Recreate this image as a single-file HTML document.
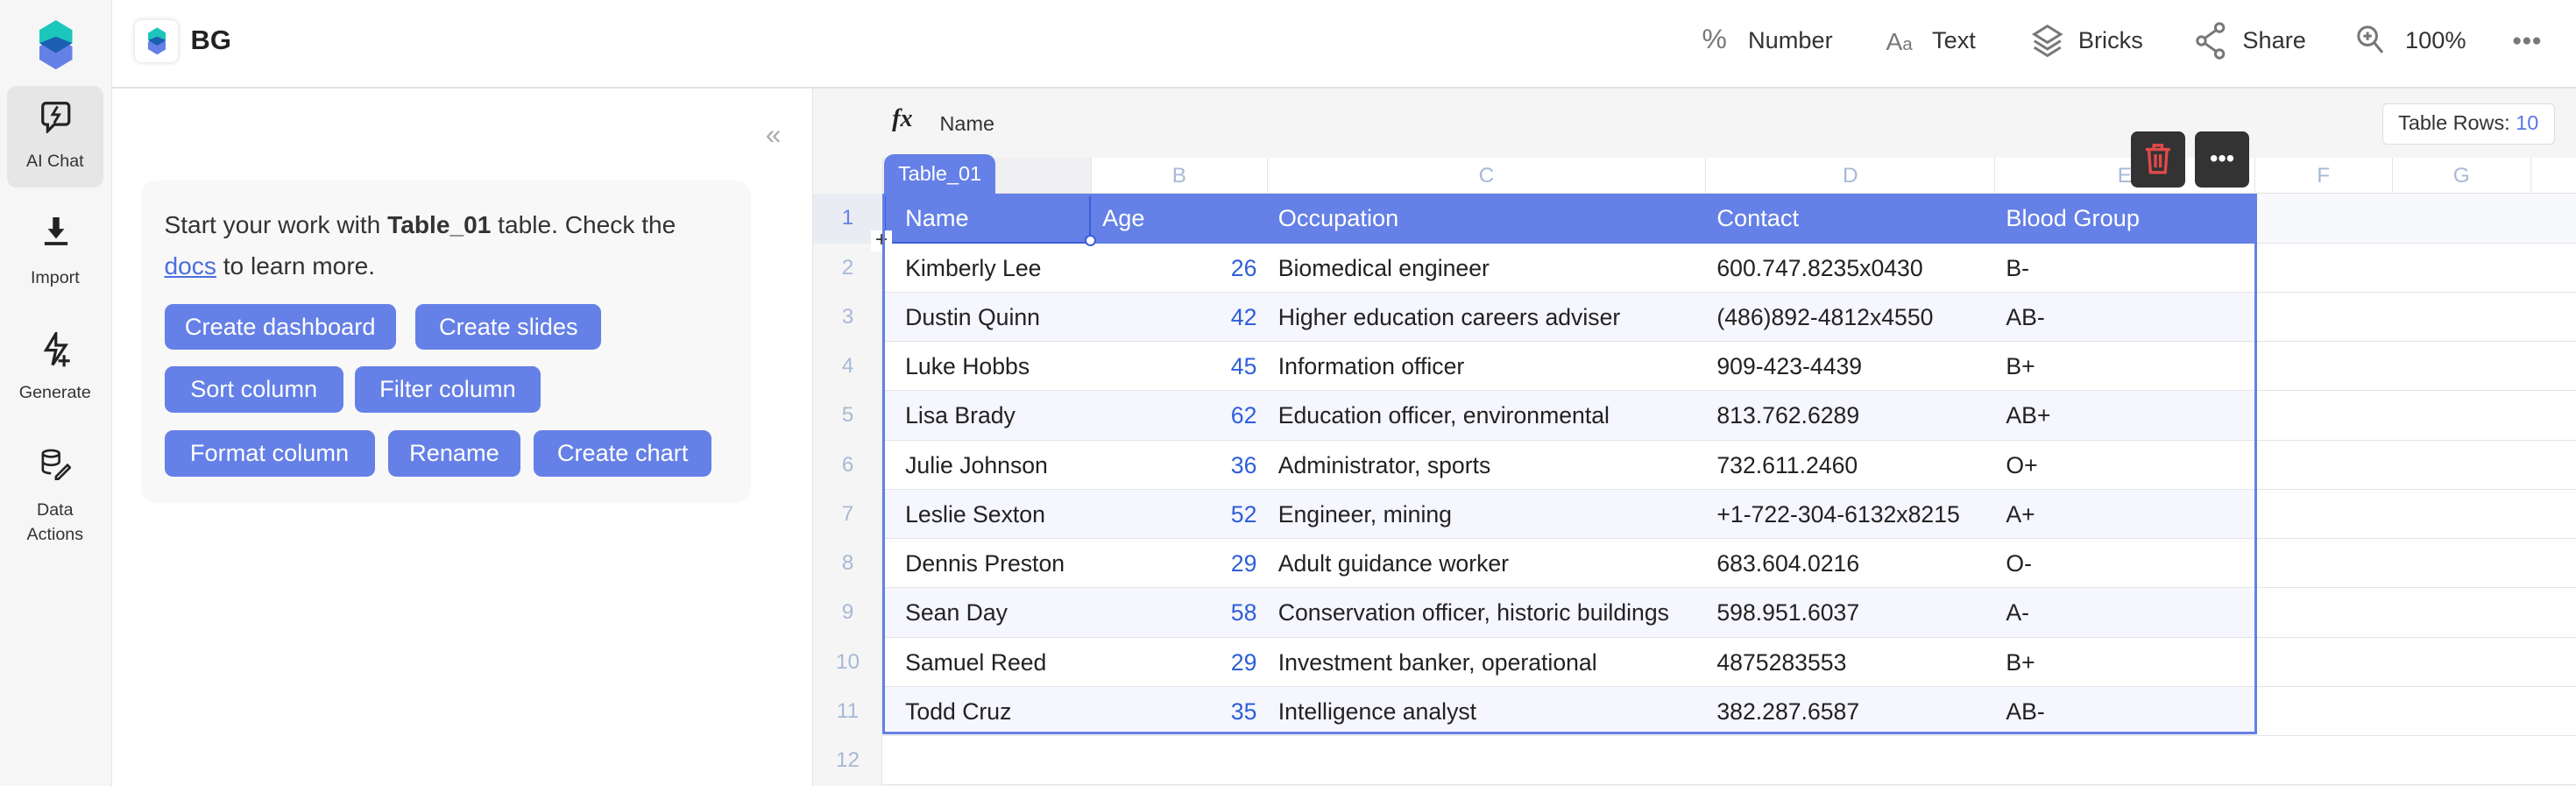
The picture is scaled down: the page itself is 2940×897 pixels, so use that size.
<!DOCTYPE html>
<html><head><meta charset="utf-8"><style>
*{box-sizing:border-box;margin:0;padding:0}
html,body{width:2940px;height:897px;overflow:hidden;background:#fff}
#root{zoom:1.875;width:1568px;height:478.4px;position:relative;font-family:"Liberation Sans",sans-serif;color:#222;overflow:hidden}
.abs{position:absolute}
.side{left:0;top:0;width:68px;height:480px;background:#f6f6f6;border-right:1px solid #e3e3e3}
.navl{position:absolute;left:0;width:67px;text-align:center;font-size:10.5px;color:#333}
.hdr{left:68px;top:0;right:0;height:54px;background:#fff;border-bottom:1.5px solid #e2e2e2}
.tb{position:absolute;top:16px;font-size:14.5px;color:#333}
.chat{left:68px;top:54px;width:427px;height:430px;background:#fff;border-right:1px solid #e3e3e3}
.card{left:86px;top:110px;width:371px;height:196px;background:#f8f8f8;border-radius:9px}
.btn{position:absolute;height:28px;line-height:28px;background:#6580e6;color:#fff;border-radius:5px;font-size:14.5px;text-align:center}
.grid{left:495px;top:54px;right:0;height:430px;background:#f5f5f5}
.colh{position:absolute;top:96px;height:22px;background:#fff;border-left:1px solid #e6e6e6;color:#a7b9d6;font-size:13px;text-align:center;line-height:22px;border-bottom:1px solid #e2e2e2}
.row{position:absolute;left:537px;right:0;height:30px;border-bottom:1px solid #e4e4e8;font-size:14px;line-height:30px}
.rn{position:absolute;left:495px;width:42px;height:30px;text-align:center;line-height:30px;font-size:13px;color:#a7b9d6}
.c{position:absolute;top:0;white-space:nowrap}
</style></head><body><div id="root">
<div class="abs side">
 <svg class="abs" style="left:24px;top:12px" width="20" height="30" viewBox="0 0 20 30"><polygon points="10,0 20,6 20,14 10,20 0,14 0,6" fill="#1cc6bb"/><polygon points="10,10 20,16 20,24 10,30 0,24 0,16" fill="#6580e6"/><polygon points="10,10 20,14 10,20 0,14" fill="#1a5fb0"/></svg>
 <div class="abs" style="left:4px;top:52px;width:59px;height:62px;background:#e6e6e6;border-radius:6px"></div>
 <svg class="abs" style="left:24px;top:61px" width="20" height="20" viewBox="0 0 20 20" fill="none" stroke="#222" stroke-width="1.7"><path d="M4 2h12a2 2 0 0 1 2 2v9a2 2 0 0 1-2 2H9l-4 4v-4H4a2 2 0 0 1-2-2V4a2 2 0 0 1 2-2z"/><path d="M11 4l-3 5h4l-3 5" stroke-width="1.5"/></svg>
 <div class="navl" style="top:92px">AI Chat</div>
 <svg class="abs" style="left:26px;top:132px" width="16" height="18" viewBox="0 0 16 18"><path d="M6 0h4v7h3l-5 6-5-6h3z" fill="#222"/><rect x="1" y="15" width="14" height="2" fill="#222"/></svg>
 <div class="navl" style="top:163px">Import</div>
 <svg class="abs" style="left:24px;top:202px" width="20" height="22" viewBox="0 0 20 22" fill="none" stroke="#222" stroke-width="1.7"><path d="M10 1L4 11h6l-2 9 8-12h-6z"/><path d="M15 14v7M11.5 17.5h7"/></svg>
 <div class="navl" style="top:233px">Generate</div>
 <svg class="abs" style="left:25px;top:273px" width="18" height="20" viewBox="0 0 18 20" fill="none" stroke="#222" stroke-width="1.4"><ellipse cx="6" cy="3" rx="5" ry="2"/><path d="M1 3v10c0 1 2 2 5 2M11 3v5M1 8c0 1 2 2 5 2s5-1 5-2"/><path d="M9 17l7-7 1.5 1.5-7 7H9z"/></svg>
 <div class="navl" style="top:303px;line-height:15px">Data<br>Actions</div>
</div>
<div class="abs hdr">
 <div class="abs" style="left:14px;top:12px;width:26px;height:26px;background:#fff;border-radius:4px;box-shadow:0 0 3px rgba(0,0,0,.18)"></div>
 <svg class="abs" style="left:22px;top:16px" width="11" height="18" viewBox="0 0 20 30"><polygon points="10,0 20,6 20,14 10,20 0,14 0,6" fill="#1cc6bb"/><polygon points="10,10 20,16 20,24 10,30 0,24 0,16" fill="#6580e6"/><polygon points="10,10 20,14 10,20 0,14" fill="#1a5fb0"/></svg>
 <div class="abs" style="left:48px;top:15px;font-size:16.5px;font-weight:bold;color:#222">BG</div>
 <div class="tb" style="left:968px;color:#777;font-size:17px;top:14px">%</div><div class="tb" style="left:996px">Number</div>
 <div class="tb" style="left:1080px;color:#777;font-size:15px;top:17px">A<span style="font-size:11px">a</span></div><div class="tb" style="left:1108px">Text</div>
 <svg class="abs" style="left:1168px;top:14px" width="20" height="22" viewBox="0 0 20 22" fill="none" stroke="#777" stroke-width="1.6"><path d="M10 2l8 5-8 5-8-5z"/><path d="M2 11l8 5 8-5M2 15l8 5 8-5"/></svg><div class="tb" style="left:1197px">Bricks</div>
 <svg class="abs" style="left:1268px;top:13px" width="20" height="24" viewBox="0 0 20 24" fill="none" stroke="#777" stroke-width="1.6"><circle cx="15" cy="4" r="2.5"/><circle cx="4" cy="12" r="2.5"/><circle cx="15" cy="20" r="2.5"/><path d="M13 5.5L6 10.5M6 13.5l7 5"/></svg><div class="tb" style="left:1297px">Share</div>
 <svg class="abs" style="left:1366px;top:15px" width="18" height="20" viewBox="0 0 18 20" fill="none" stroke="#777" stroke-width="1.6"><circle cx="7" cy="7" r="5.5"/><path d="M11 11l5 6M7 4.5v5M4.5 7h5"/></svg><div class="tb" style="left:1396px">100%</div>
 <svg class="abs" style="left:1461px;top:22px" width="18" height="6" viewBox="0 0 18 6" fill="#777"><circle cx="3" cy="3" r="2.2"/><circle cx="9" cy="3" r="2.2"/><circle cx="15" cy="3" r="2.2"/></svg>
</div>
<div class="abs chat"><div class="abs" style="left:398px;top:18px;font-size:17px;color:#aaa">«</div></div>
<div class="abs card">
 <div class="abs" style="left:14px;top:15px;font-size:15px;line-height:25px;color:#333;white-space:nowrap">Start your work with <b>Table_01</b> table. Check the<br><span style="color:#4a6ee0;text-decoration:underline">docs</span> to learn more.</div>
</div>
<div class="btn" style="left:100px;top:185px;width:141px">Create dashboard</div>
<div class="btn" style="left:253px;top:185px;width:113px">Create slides</div>
<div class="btn" style="left:100px;top:223px;width:109px">Sort column</div>
<div class="btn" style="left:216px;top:223px;width:113px">Filter column</div>
<div class="btn" style="left:100px;top:262px;width:128px">Format column</div>
<div class="btn" style="left:236px;top:262px;width:81px">Rename</div>
<div class="btn" style="left:325px;top:262px;width:108px">Create chart</div>
<div class="abs grid"></div>
<div class="abs" style="left:543px;top:64px;font-size:15px;font-style:italic;font-family:'Liberation Serif',serif;font-weight:bold">fx</div>
<div class="abs" style="left:572px;top:68px;font-size:12.5px;color:#333">Name</div>
<div class="abs" style="left:1450px;top:63px;width:105px;height:25px;background:#fff;border:1px solid #ddd;border-radius:3px;font-size:12.5px;line-height:23px;text-align:center;color:#333">Table Rows: <span style="color:#5a78e0">10</span></div>
<div class="colh" style="left:537px;width:127px;background:#f0f0f2"></div>
<div class="abs" style="left:538px;top:94px;width:68px;height:24px;background:#6580e6;border-radius:6px 6px 0 0;color:#fff;font-size:12.5px;line-height:24px;text-align:center">Table_01</div>
<div class="colh" style="left:664px;width:107px">B</div>
<div class="colh" style="left:771px;width:267px">C</div>
<div class="colh" style="left:1038px;width:176px">D</div>
<div class="colh" style="left:1214px;width:158px">E</div>
<div class="colh" style="left:1372px;width:84px">F</div>
<div class="colh" style="left:1456px;width:84px">G</div>
<div class="colh" style="left:1540px;width:40px"></div>
<div class="abs" style="left:1297px;top:80px;width:33px;height:34px;background:#333;border-radius:4px"></div>
<svg class="abs" style="left:1304px;top:87px" width="19" height="20" viewBox="0 0 19 20" fill="none" stroke="#e14a4a" stroke-width="1.8"><path d="M2 4h15M7 4V1.5h5V4M4 4l1 14h9l1-14M8 7v8M11 7v8"/></svg>
<div class="abs" style="left:1336px;top:80px;width:33px;height:34px;background:#333;border-radius:4px"></div>
<svg class="abs" style="left:1345px;top:94px" width="15" height="5" viewBox="0 0 15 5" fill="#fff"><circle cx="2.5" cy="2.5" r="2"/><circle cx="7.5" cy="2.5" r="2"/><circle cx="12.5" cy="2.5" r="2"/></svg>
<div id="rows"></div>
<div class="abs" style="left:495px;top:118px;width:42px;height:30px;background:#e9ecf3"></div>
<div class="rn" style="top:118px;color:#6580e6">1</div>
<div class="row" style="top:118px;background:#f8f9fc"></div>
<div class="abs" style="left:537px;top:118px;width:836px;height:30px;background:#6580e6;color:#fff;font-size:14.5px;line-height:30px">
 <span class="c" style="left:14px">Name</span><span class="c" style="left:134px">Age</span><span class="c" style="left:241px">Occupation</span><span class="c" style="left:508px">Contact</span><span class="c" style="left:684px">Blood Group</span>
</div>
<div class="abs" style="left:538px;top:118px;width:126px;height:30px;border:1.5px solid #3c5ed6"></div>
<div class="abs" style="left:660px;top:143px;width:7px;height:7px;border-radius:50%;background:#fff;border:1.5px solid #3c5ed6"></div>
<div class="abs" style="left:530px;top:140px;width:13px;height:13px;background:#fff;font-size:13px;line-height:12px;text-align:center;color:#333">+</div>
<div class="abs" style="left:537px;top:118px;width:837px;height:329px;border:2px solid #6580e6"></div>
<script>
var d=[["Kimberly Lee",26,"Biomedical engineer","600.747.8235x0430","B-"],["Dustin Quinn",42,"Higher education careers adviser","(486)892-4812x4550","AB-"],["Luke Hobbs",45,"Information officer","909-423-4439","B+"],["Lisa Brady",62,"Education officer, environmental","813.762.6289","AB+"],["Julie Johnson",36,"Administrator, sports","732.611.2460","O+"],["Leslie Sexton",52,"Engineer, mining","+1-722-304-6132x8215","A+"],["Dennis Preston",29,"Adult guidance worker","683.604.0216","O-"],["Sean Day",58,"Conservation officer, historic buildings","598.951.6037","A-"],["Samuel Reed",29,"Investment banker, operational","4875283553","B+"],["Todd Cruz",35,"Intelligence analyst","382.287.6587","AB-"]];
var h='<div class="abs" style="left:495px;top:148px;width:42px;height:340px;background:#f5f5f5;border-right:1px solid #e6e6e6"></div>';
for(var i=0;i<11;i++){var t=148+i*30;h+='<div class="rn" style="top:'+t+'px">'+(i+2)+'</div>';
var bg=(i%2==1)?'#f5f6fe':'#fff';
h+='<div class="row" style="top:'+t+'px;background:#fff"></div>';
if(i<10){var r=d[i];h+='<div class="abs" style="left:537px;top:'+t+'px;width:836px;height:30px;background:'+bg+';border-bottom:1px solid #e4e4e8;font-size:14.2px;line-height:30px">'+
'<span class="c" style="left:14px">'+r[0]+'</span><span class="c" style="right:608px;color:#2d5fd8">'+r[1]+'</span><span class="c" style="left:241px">'+r[2]+'</span><span class="c" style="left:508px">'+r[3]+'</span><span class="c" style="left:684px">'+r[4]+'</span></div>';}}
document.getElementById('rows').innerHTML=h;
</script>
</div></body></html>
